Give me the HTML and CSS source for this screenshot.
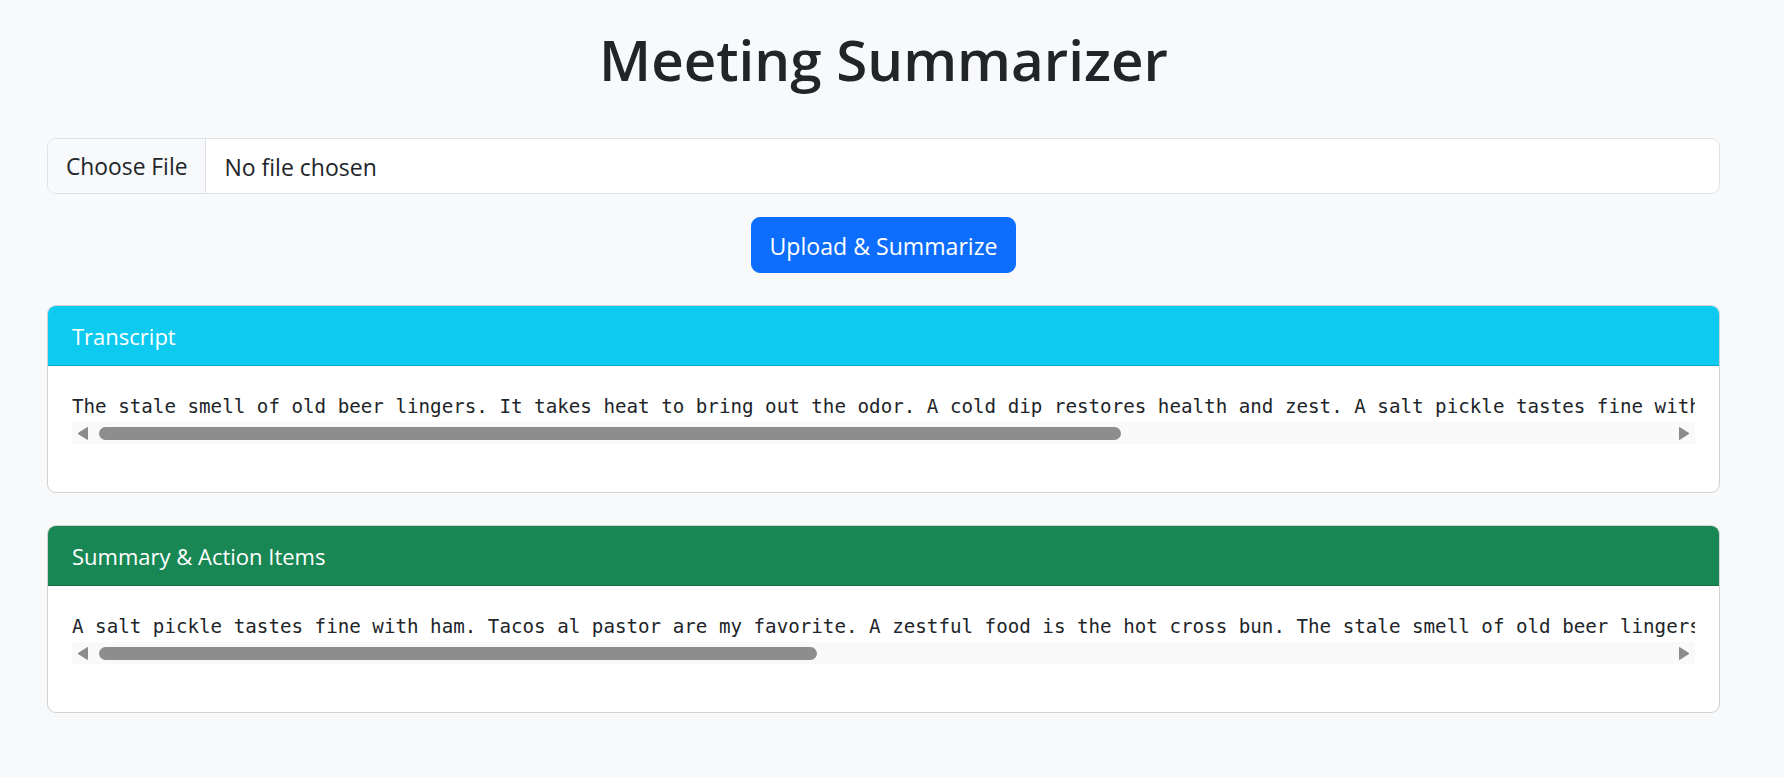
FILE: index.html
```html
<!DOCTYPE html>
<html lang="en">
<head>
<meta charset="utf-8">
<title>Meeting Summarizer</title>
<link rel="stylesheet" href="styles.css">
</head>
<body>
<main class="container">
  <h1 class="title">Meeting Summarizer</h1>

  <form class="upload-form">
    <label class="file-input">
      <span class="file-btn">Choose File</span>
      <span class="file-name">No file chosen</span>
    </label>
    <div class="actions">
      <button type="button" class="btn-primary">Upload &amp; Summarize</button>
    </div>
  </form>

  <section class="card card-info">
    <div class="card-header">Transcript</div>
    <div class="card-body">
      <pre class="mono">The stale smell of old beer lingers. It takes heat to bring out the odor. A cold dip restores health and zest. A salt pickle tastes fine with ham. Tacos al pastor are my favorite. A zestful food is the hot cross bun.</pre>
      <div class="hscroll">
        <span class="sb-btn"><svg width="22" height="22" viewBox="0 0 22 22"><polygon points="6,11.5 15.5,5.5 15.5,17.5" fill="#8b8b8b" stroke="#8b8b8b" stroke-width="1" stroke-linejoin="round"/></svg></span>
        <span class="sb-track"><span class="sb-thumb" style="width:1022px"></span></span>
        <span class="sb-btn"><svg width="22" height="22" viewBox="0 0 22 22"><polygon points="16,11.5 6.5,5.5 6.5,17.5" fill="#8b8b8b" stroke="#8b8b8b" stroke-width="1" stroke-linejoin="round"/></svg></span>
      </div>
    </div>
  </section>

  <section class="card card-success">
    <div class="card-header">Summary &amp; Action Items</div>
    <div class="card-body">
      <pre class="mono">A salt pickle tastes fine with ham. Tacos al pastor are my favorite. A zestful food is the hot cross bun. The stale smell of old beer lingers. It takes heat to bring out the odor. A cold dip restores health and zest. Action items: review notes, follow up.</pre>
      <div class="hscroll">
        <span class="sb-btn"><svg width="22" height="22" viewBox="0 0 22 22"><polygon points="6,11.5 15.5,5.5 15.5,17.5" fill="#8b8b8b" stroke="#8b8b8b" stroke-width="1" stroke-linejoin="round"/></svg></span>
        <span class="sb-track"><span class="sb-thumb" style="width:718px"></span></span>
        <span class="sb-btn"><svg width="22" height="22" viewBox="0 0 22 22"><polygon points="16,11.5 6.5,5.5 6.5,17.5" fill="#8b8b8b" stroke="#8b8b8b" stroke-width="1" stroke-linejoin="round"/></svg></span>
      </div>
    </div>
  </section>
</main>
</body>
</html>
```

FILE: styles.css
```css
* { box-sizing: border-box; }

html, body {
  margin: 0;
  padding: 0;
}

body {
  background: #f8f9fa;
  color: #212529;
  font-family: "Open Sans", "Noto Sans", sans-serif;
  font-size: 22.8px;
  line-height: 36px;
}

.container {
  width: 1673px;
  margin-left: 47px;
  padding-top: 24px;
  padding-bottom: 40px;
}

.title {
  margin: 0 0 42px;
  text-align: center;
  font-size: 56.5px;
  font-weight: 600;
  line-height: 72px;
  color: #212529;
}

.upload-form {
  margin: 0 0 32px;
}

.file-input {
  display: flex;
  height: 56px;
  background: #fff;
  border: 1px solid #dee2e6;
  border-radius: 9px;
  overflow: hidden;
  color: #212529;
}

.file-btn {
  display: flex;
  align-items: center;
  padding: 1px 18px 0;
  background: #f8f9fa;
  border-right: 1px solid #dee2e6;
}

.file-name {
  display: flex;
  align-items: center;
  padding: 1px 0 0 18px;
  font-size: 23px;
}

.actions {
  margin-top: 23px;
  text-align: center;
}

.btn-primary {
  display: inline-block;
  height: 56px;
  padding: 10px 18px 8px;
  font-family: inherit;
  font-size: 23.1px;
  line-height: 36px;
  color: #fff;
  background: #0d6efd;
  border: 1px solid #0d6efd;
  border-radius: 9px;
}

.card {
  background: #fff;
  border: 1px solid rgba(0, 0, 0, 0.175);
  border-radius: 9px;
  margin-bottom: 32px;
  overflow: hidden;
}

.card-header {
  padding: 12px 24px 11px;
  font-size: 22px;
  line-height: 36px;
  color: #fff;
  border-bottom: 1px solid rgba(0, 0, 0, 0.175);
}

.card-info .card-header { background: #0dcaf0; }
.card-success .card-header { background: #198754; }

.card-body {
  padding: 26px 24px 24px;
}

.mono {
  margin: 0;
  font-family: "DejaVu Sans Mono", monospace;
  font-size: 19.2px;
  line-height: 29px;
  color: #212529;
  white-space: pre;
  overflow: hidden;
}

.hscroll {
  display: flex;
  align-items: center;
  height: 22px;
  margin-top: 1px;
  margin-bottom: 24px;
  background: #f9f9f9;
}

.sb-btn {
  display: flex;
  width: 22px;
  height: 22px;
  flex: none;
}

.sb-track {
  flex: 1;
  display: flex;
  align-items: center;
  height: 22px;
}

.sb-thumb {
  display: block;
  height: 13px;
  margin-left: 5px;
  border-radius: 7px;
  background: #8d8d8d;
}
```
